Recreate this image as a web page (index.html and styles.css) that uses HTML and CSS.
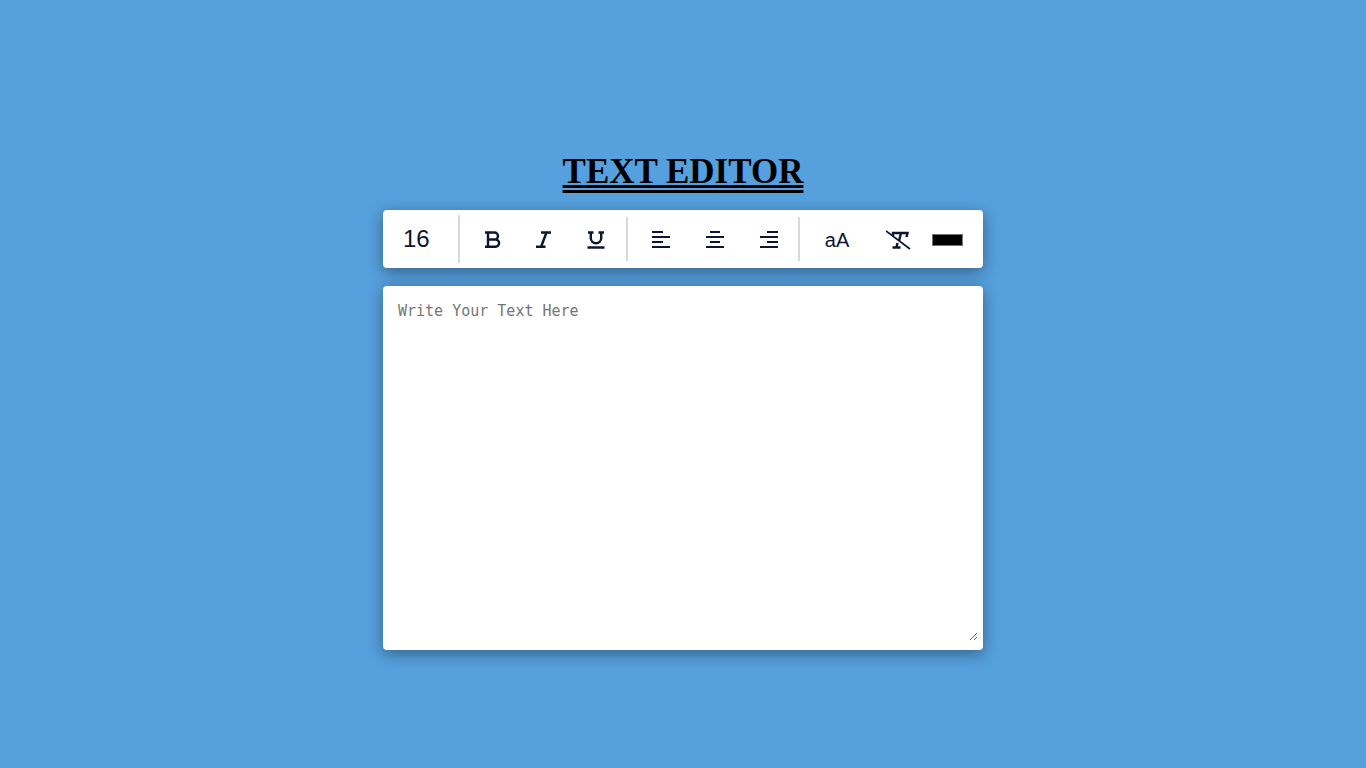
FILE: index.html
```html
<!DOCTYPE html>
<html lang="en">
<head>
<meta charset="utf-8">
<meta name="viewport" content="width=device-width, initial-scale=1">
<title>Text Editor</title>
<link rel="stylesheet" href="styles.css">
</head>
<body>
<main class="editor">
  <h1 class="title">TEXT EDITOR</h1>
  <div class="toolbar panel" role="toolbar" aria-label="Formatting">
    <div class="group group-size">
      <input class="size" type="number" value="16" min="1" max="100" aria-label="Font size">
    </div>
    <div class="group group-style">
      <button class="tool" type="button" aria-label="Bold"><svg class="icon bold" viewBox="0 0 24 24"><path d="M5 5.500h9.500a3.500 3.500 0 0 1 0 7H8M14.500 12.500h1a3.600 3.600 0 0 1 0 7.200H5M8 5.500V20"/></svg></button>
      <button class="tool" type="button" aria-label="Italic"><svg class="icon bold" viewBox="0 0 24 24"><path d="M9 5.500h10M4 19.700h9.500M14.500 5.500L9 20"/></svg></button>
      <button class="tool" type="button" aria-label="Underline"><svg class="icon bold" viewBox="0 0 24 24"><path d="M4 5.500h5.500M14.500 5.500H20M6.800 5.500v5.500a5.200 5.200 0 0 0 10.400 0V5.500M3.500 20.500h17"/></svg></button>
    </div>
    <div class="group group-align">
      <button class="tool" type="button" aria-label="Align left"><svg class="icon" viewBox="0 0 24 24"><path d="M3 5h11M3 10h18M3 15h11M3 20h18"/></svg></button>
      <button class="tool" type="button" aria-label="Align center"><svg class="icon" viewBox="0 0 24 24"><path d="M7 5h10M3 10h18M7 15h10M3 20h18"/></svg></button>
      <button class="tool" type="button" aria-label="Align right"><svg class="icon" viewBox="0 0 24 24"><path d="M10 5h11M3 10h18M10 15h11M3 20h18"/></svg></button>
    </div>
    <div class="group group-extra">
      <button class="tool case" type="button">aA</button>
      <button class="tool" type="button" aria-label="Clear formatting"><svg class="icon icon-wide" viewBox="0 0 26 20"><path class="bold" d="M7 6V3h14.500l-1 4M15 3l-2 8M11.500 13L10.500 17.500M6.500 17.500h8"/><path class="thin" d="M0 1l24 18"/></svg></button>
      <input class="color" type="color" value="#000000" aria-label="Text color">
    </div>
  </div>
  <div class="page panel">
    <textarea class="text" placeholder="Write Your Text Here" aria-label="Text"></textarea>
  </div>
</main>
</body>
</html>
```
FILE: styles.css
```css
* {
  box-sizing: border-box;
}

body {
  margin: 0;
  min-height: 100vh;
  padding: 34px 16px 0;
  display: flex;
  align-items: center;
  justify-content: center;
  background: #56a0de;
  color: #0e1530;
  font-family: "Liberation Sans", Arial, sans-serif;
}

.editor {
  width: 100%;
  max-width: 600px;
  display: flex;
  flex-direction: column;
  gap: 18px;
}

.title {
  margin: 0;
  color: #000;
  font: bold 35px/40px "Liberation Serif", "Times New Roman", serif;
  text-align: center;
  text-decoration: underline double;
}

.panel {
  background: #fff;
  border-radius: 4px;
  box-shadow: 0 4px 16px rgba(0, 0, 0, 0.4);
}

.toolbar {
  display: grid;
  grid-template-columns: 77fr 168fr 172fr 183fr;
  align-items: center;
  min-height: 58px;
}

.group {
  display: flex;
  align-items: center;
  min-width: 0;
  height: 44px;
  border-right: 2px solid #d8d8dc;
}

.group-size {
  height: 48px;
  padding-left: 20px;
}

.group-style {
  padding-left: 6px;
  padding-right: 4px;
}

.group-align {
  padding-left: 6px;
  padding-right: 2px;
}

.group-extra {
  gap: 4px;
  padding: 2px 20px 0 8px;
  border-right: 0;
}

.size {
  width: 100%;
  padding: 0;
  border: 0;
  background: none;
  color: inherit;
  font: 24px/28px "Liberation Sans", Arial, sans-serif;
  appearance: textfield;
}

.size::-webkit-inner-spin-button {
  appearance: none;
}

.tool {
  flex: 1;
  display: flex;
  align-items: center;
  justify-content: center;
  height: 40px;
  padding: 0;
  border: 0;
  background: none;
  color: inherit;
  cursor: pointer;
}

.case {
  font: 20px/24px "Liberation Sans", Arial, sans-serif;
}

.icon {
  width: 24px;
  height: 24px;
  fill: none;
  stroke: currentColor;
  stroke-width: 2;
}

.icon-wide {
  width: 26px;
  height: 20px;
}

.bold {
  stroke-width: 2.4;
}

.thin {
  stroke-width: 1.7;
}

.color {
  width: 31px;
  height: 12px;
  padding: 0;
  border: 0;
  appearance: none;
  background: none;
}

.color::-webkit-color-swatch-wrapper {
  padding: 0;
}

.color::-webkit-color-swatch {
  border: 1px solid #777;
}

.page {
  padding: 7px 5px 9px;
}

.text {
  display: block;
  width: 100%;
  height: 348px;
  padding: 8px 10px;
  border: 0;
  outline: 0;
  background: none;
  color: inherit;
  font: 15px/20px Consolas, "DejaVu Sans Mono", monospace;
  resize: vertical;
}

.text::placeholder {
  color: #757575;
}
```
